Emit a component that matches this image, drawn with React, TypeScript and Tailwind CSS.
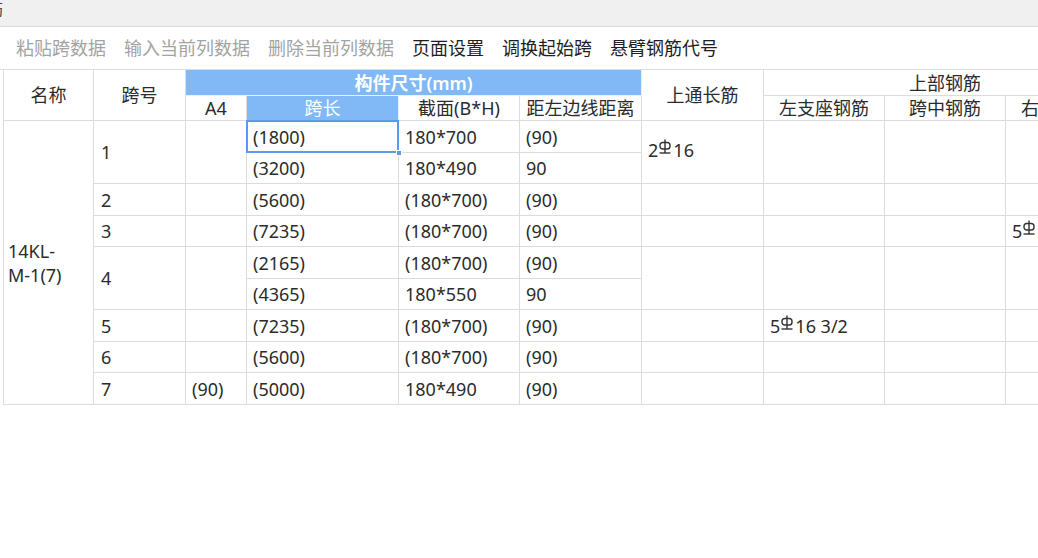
import type { ReactNode } from 'react'

// rebar grade symbol (HRB400)
function Rebar() {
  return (
    <svg viewBox="0 0 14 15" className="inline-block w-[14px] h-[15px] mr-[1px] align-[3px]" fill="none" stroke="#333" strokeWidth="1.4">
      <path d="M7 0.5v13.5" />
      <rect x="2" y="3.5" width="10" height="6.5" rx="2.8" />
      <path d="M1.5 14h11" />
    </svg>
  )
}

const tools = [
  { label: '粘贴跨数据', on: false },
  { label: '输入当前列数据', on: false },
  { label: '删除当前列数据', on: false },
  { label: '页面设置', on: true },
  { label: '调换起始跨', on: true },
  { label: '悬臂钢筋代号', on: true },
]

const line = 'border-r border-b border-[#dcdcdc]'
const cell = `${line} px-[6px] text-left align-middle whitespace-nowrap`
const head = `${line} text-center align-middle whitespace-nowrap font-normal`

function Td({ children, rowSpan, className = '' }: { children?: ReactNode; rowSpan?: number; className?: string }) {
  return (
    <td rowSpan={rowSpan} className={`${cell} ${className}`}>
      {children}
    </td>
  )
}

export default function App() {
  return (
    <div className="w-[1038px] h-[558px] bg-white overflow-hidden text-[#2b2b2b] text-[18px] leading-[24px] font-['Noto_Sans','Noto_Sans_CJK_SC',sans-serif]">
      {/* Title bar */}
      <div className="h-[27px] bg-[#f0f0f0] border-b border-[#dcdcdc] overflow-hidden">
        <span className="block -ml-[13px] -mt-[3px] text-[16px] text-[#444]">筋</span>
      </div>

      {/* Toolbar */}
      <div className="h-[42px] flex items-center gap-[18px] pl-[16px]">
        {tools.map((t) => (
          <span key={t.label} className={t.on ? 'text-[#1e1e1e]' : 'text-[#a3a3a3]'}>
            {t.label}
          </span>
        ))}
      </div>

      {/* Grid */}
      <div className="w-full overflow-hidden border-t border-[#dcdcdc]">
        <table className="table-fixed border-separate border-spacing-0 ml-[3px] border-l border-[#dcdcdc] w-[1123px]">
          <colgroup>
            <col className="w-[90px]" />
            <col className="w-[92px]" />
            <col className="w-[61px]" />
            <col className="w-[152px]" />
            <col className="w-[121px]" />
            <col className="w-[122px]" />
            <col className="w-[122px]" />
            <col className="w-[121px]" />
            <col className="w-[121px]" />
            <col className="w-[121px]" />
          </colgroup>
          <thead>
            <tr className="h-[26px]">
              <th rowSpan={2} className={head}>名称</th>
              <th rowSpan={2} className={head}>跨号</th>
              <th colSpan={4} className="border-r border-b border-[#e8f2fd] bg-[#80b9f5] text-white font-semibold text-center align-middle">
                构件尺寸(mm)
              </th>
              <th rowSpan={2} className={head}>上通长筋</th>
              <th colSpan={3} className={head}>上部钢筋</th>
            </tr>
            <tr className="h-[25px]">
              <th className={head}>A4</th>
              <th className="border-r border-b border-[#e8f2fd] bg-[#80b9f5] text-white font-normal text-center align-middle">跨长</th>
              <th className={head}>截面(B*H)</th>
              <th className={head}>距左边线距离</th>
              <th className={head}>左支座钢筋</th>
              <th className={head}>跨中钢筋</th>
              <th className={head}>右支座钢筋</th>
            </tr>
          </thead>
          <tbody>
            <tr className="h-[32px]">
              <td rowSpan={9} className={`${line} pl-[4px] text-left align-middle`}>
                14KL-
                <br />
                M-1(7)
              </td>
              <Td rowSpan={2} className="pl-[7px]">1</Td>
              <Td rowSpan={2} />
              <td className={`${cell} relative`}>
                <div className="absolute inset-[-1px] border-2 border-[#5a9ae6]" />
                <div className="absolute right-[-4px] bottom-[-4px] w-[6px] h-[6px] bg-[#5a9ae6] border border-white" />
                (1800)
              </td>
              <Td>180*700</Td>
              <Td>(90)</Td>
              <Td rowSpan={2} className="pb-[4px]">
                2<Rebar />16
              </Td>
              <Td rowSpan={2} />
              <Td rowSpan={2} />
              <Td rowSpan={2} />
            </tr>
            <tr className="h-[31px]">
              <Td>(3200)</Td>
              <Td>180*490</Td>
              <Td>90</Td>
            </tr>
            <tr className="h-[32px]">
              <Td className="pl-[7px]">2</Td>
              <Td />
              <Td>(5600)</Td>
              <Td>(180*700)</Td>
              <Td>(90)</Td>
              <Td />
              <Td />
              <Td />
              <Td />
            </tr>
            <tr className="h-[31px]">
              <Td className="pl-[7px]">3</Td>
              <Td />
              <Td>(7235)</Td>
              <Td>(180*700)</Td>
              <Td>(90)</Td>
              <Td />
              <Td />
              <Td />
              <Td>
                5<Rebar />25 4/4
              </Td>
            </tr>
            <tr className="h-[32px]">
              <Td rowSpan={2} className="pl-[7px]">4</Td>
              <Td rowSpan={2} />
              <Td>(2165)</Td>
              <Td>(180*700)</Td>
              <Td>(90)</Td>
              <Td rowSpan={2} />
              <Td rowSpan={2} />
              <Td rowSpan={2} />
              <Td rowSpan={2} />
            </tr>
            <tr className="h-[31px]">
              <Td>(4365)</Td>
              <Td>180*550</Td>
              <Td>90</Td>
            </tr>
            <tr className="h-[32px]">
              <Td className="pl-[7px]">5</Td>
              <Td />
              <Td>(7235)</Td>
              <Td>(180*700)</Td>
              <Td>(90)</Td>
              <Td />
              <Td>
                5<Rebar />16 3/2
              </Td>
              <Td />
              <Td />
            </tr>
            <tr className="h-[31px]">
              <Td className="pl-[7px]">6</Td>
              <Td />
              <Td>(5600)</Td>
              <Td>(180*700)</Td>
              <Td>(90)</Td>
              <Td />
              <Td />
              <Td />
              <Td />
            </tr>
            <tr className="h-[32px]">
              <Td className="pl-[7px]">7</Td>
              <Td className="px-[4px]">(90)</Td>
              <Td>(5000)</Td>
              <Td>180*490</Td>
              <Td>(90)</Td>
              <Td />
              <Td />
              <Td />
              <Td />
            </tr>
          </tbody>
        </table>
      </div>
    </div>
  )
}
